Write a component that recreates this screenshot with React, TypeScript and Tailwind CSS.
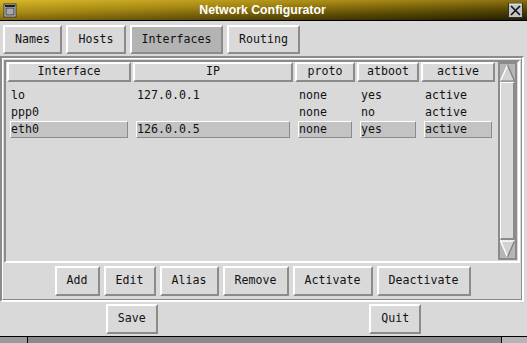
import React from "react";

const raised =
  "border-2 border-t-white border-l-white border-r-[#8b8b8b] border-b-[#8b8b8b]";

const cols = [
  { title: "Interface", w: "w-[124px]" },
  { title: "IP", w: "w-[160px]" },
  { title: "proto", w: "w-[60px]" },
  { title: "atboot", w: "w-[62px]" },
  { title: "active", w: "w-[74px]" },
];

const rows = [
  { cells: ["lo", "127.0.0.1", "none", "yes", "active"], sel: false },
  { cells: ["ppp0", "", "none", "no", "active"], sel: false },
  { cells: ["eth0", "126.0.0.5", "none", "yes", "active"], sel: true },
];

const actions = [
  { label: "Add", w: "w-[45px]" },
  { label: "Edit", w: "w-[52px]" },
  { label: "Alias", w: "w-[59px]" },
  { label: "Remove", w: "w-[66px]" },
  { label: "Activate", w: "w-[80px]" },
  { label: "Deactivate", w: "w-[94px]" },
];

function Btn({ label, className = "", pressed = false }: { label: string; className?: string; pressed?: boolean }) {
  return (
    <div
      className={`flex items-center justify-center ${raised} ${pressed ? "bg-[#b3b3b3]" : "bg-[#d9d9d9]"} ${className}`}
    >
      {label}
    </div>
  );
}

function WinIcon() {
  return (
    <svg width="14" height="15" viewBox="0 0 14 15">
      <rect x="0.5" y="0.5" width="13" height="14" fill="#3a3a3a" />
      <rect x="1.5" y="1.5" width="11" height="12" fill="#d0d0d0" />
      <rect x="2" y="2" width="10" height="2" fill="#202020" />
      <rect x="3" y="5" width="8" height="7" fill="#a8a8a8" stroke="#404040" strokeWidth="1" />
    </svg>
  );
}

function CloseIcon() {
  return (
    <svg width="15" height="15" viewBox="0 0 15 15">
      <rect x="0" y="0" width="15" height="15" fill="#303030" />
      <rect x="1" y="1" width="13" height="13" fill="#c4c4c4" />
      <path d="M1 1h13" stroke="#f0f0f0" strokeWidth="1" />
      <path d="M3 3 L12 12 M12 3 L3 12" stroke="#101010" strokeWidth="1.6" />
    </svg>
  );
}

function UpArrow() {
  return (
    <svg width="15" height="18" viewBox="0 0 15 18" className="shrink-0">
      <rect width="15" height="18" fill="#b6b6b6" />
      <polygon points="7.5,1 0.5,17 14.5,17" fill="#d2d2d2" />
      <path d="M7.5 1 L0.5 17" stroke="#ffffff" strokeWidth="1.4" />
      <path d="M7.5 1 L14.5 17 L0.5 17" stroke="#7d7d7d" strokeWidth="1.2" fill="none" />
    </svg>
  );
}

function DownArrow() {
  return (
    <svg width="15" height="18" viewBox="0 0 15 18" className="shrink-0">
      <rect width="15" height="18" fill="#b6b6b6" />
      <polygon points="0.5,1 14.5,1 7.5,17" fill="#d2d2d2" />
      <path d="M7.5 17 L0.5 1 L14.5 1" stroke="#ffffff" strokeWidth="1.4" fill="none" />
      <path d="M14.5 1 L7.5 17" stroke="#7d7d7d" strokeWidth="1.2" />
    </svg>
  );
}

export default function App() {
  return (
    <div className="w-[527px] h-[343px] overflow-hidden bg-[#d9d9d9] flex flex-col font-['DejaVu_Sans_Mono',monospace] text-[11.6px] leading-none text-[#111] select-none">
      {/* title bar */}
      <div className="h-[21px] shrink-0 flex items-center border-b border-black bg-[linear-gradient(178deg,#d8b82a_0%,#a68814_35%,#5a4a06_70%,#221c00_100%)]">
        <div className="ml-[3px] mt-[1px] flex">
          <WinIcon />
        </div>
        <div className="flex-1 text-center font-['Liberation_Sans',Arial,sans-serif] font-bold text-[12.3px] text-white">
          Network Configurator
        </div>
        <div className="mr-[4px] mt-[1px] flex">
          <CloseIcon />
        </div>
      </div>

      {/* tabs */}
      <div className="flex gap-[4px] pl-[3px] pt-[4px] h-[33px] shrink-0">
        <Btn label="Names" className="w-[59px]" />
        <Btn label="Hosts" className="w-[60px]" />
        <Btn label="Interfaces" className="w-[93px]" pressed />
        <Btn label="Routing" className="w-[73px]" />
      </div>

      {/* main panel */}
      <div className="mt-[2px] w-[524px] h-[246px] shrink-0 border-2 border-t-[#8b8b8b] border-l-[#8b8b8b] border-r-white border-b-white">
        <div className="h-full flex flex-col border border-t-white border-l-white border-r-[#8b8b8b] border-b-[#8b8b8b] pl-[1px] pt-[1px]">
          {/* list box */}
          <div className="w-[516px] h-[203px] flex border-2 border-t-[#8b8b8b] border-l-[#8b8b8b] border-r-white border-b-white">
            <div className="flex-1 pl-[1px] flex flex-col">
              <div className="flex gap-[2px] h-[20px]">
                {cols.map((c) => (
                  <div key={c.title} className={`${c.w} ${raised} flex items-center justify-center`}>
                    {c.title}
                  </div>
                ))}
              </div>
              <div className="mt-[5px] flex flex-col">
                {rows.map((r, i) => (
                  <div key={i} className="flex gap-[2px] h-[17px]">
                    {cols.map((c, j) => (
                      <div key={j} className={`${c.w} px-[3px]`}>
                        <div
                          className={`h-full flex items-center border ${
                            r.sel
                              ? "bg-[#c3c3c3] border-t-white border-l-white border-r-[#8b8b8b] border-b-[#8b8b8b]"
                              : "border-transparent"
                          }`}
                        >
                          {r.cells[j]}
                        </div>
                      </div>
                    ))}
                  </div>
                ))}
              </div>
            </div>
            {/* scrollbar */}
            <div className="w-[19px] mr-[1px] mb-[1px] flex flex-col border-2 border-[#8b8b8b]">
              <UpArrow />
              <div className="flex-1 border-l border-t border-l-white border-t-white border-r-2 border-b-2 border-r-[#8b8b8b] border-b-[#8b8b8b]" />
              <DownArrow />
            </div>
          </div>

          {/* action buttons */}
          <div className="mt-[3px] h-[30px] flex justify-center gap-[4px]">
            {actions.map((a) => (
              <Btn key={a.label} label={a.label} className={a.w} />
            ))}
          </div>
        </div>
      </div>

      {/* save / quit */}
      <div className="mt-[2px] h-[30px] flex shrink-0">
        <div className="flex-1 flex justify-center">
          <Btn label="Save" className="w-[52px]" />
        </div>
        <div className="flex-1 flex justify-center">
          <Btn label="Quit" className="w-[52px]" />
        </div>
      </div>

      {/* bottom strip */}
      <div className="mt-[2px] flex-1 flex border-t border-black">
        <div className="w-[27px] bg-[#9a9a9a]" />
        <div className="flex-1 bg-[#8a8a8a] border-l border-black" />
        <div className="w-[26px] bg-[#b4b4b4] border-l border-black" />
      </div>
    </div>
  );
}
